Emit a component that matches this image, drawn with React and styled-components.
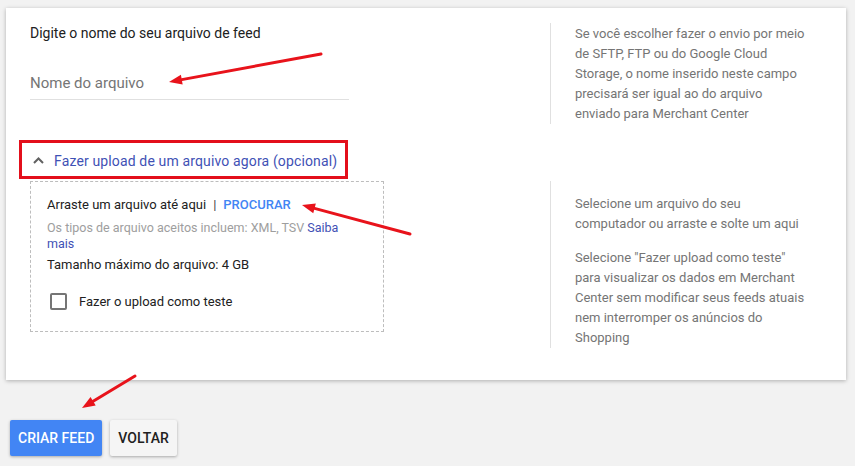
import React from "react";
import styled, { createGlobalStyle } from "styled-components";

const Global = createGlobalStyle`
  html, body { margin: 0; padding: 0; background: #f2f2f2; }
  body { font-family: Roboto, "Noto Sans", Arial, sans-serif; -webkit-font-smoothing: antialiased; }
  * { box-sizing: border-box; }
`;

const Page = styled.div`
  position: relative;
  width: 855px;
  height: 466px;
  padding: 8px 0 0 6px;
  overflow: hidden;
`;

const Card = styled.section`
  width: 840px;
  background: #fff;
  box-shadow: 0 1px 4px rgba(0, 0, 0, 0.28);
  padding: 15px 0 32px 0;
`;

const Row = styled.div`
  display: grid;
  grid-template-columns: 544px 296px;
  margin-top: ${(p) => p.$gap || 0}px;
`;

const Main = styled.div`
  padding-left: 24px;
`;

const Help = styled.aside`
  border-left: 1px solid #e0e0e0;
  padding: ${(p) => p.$top || 0}px 0 0 24px;
  color: #757575;
  font-size: 13px;
  line-height: 20px;
`;

const HelpText = styled.p`
  margin: 0 0 ${(p) => p.$after || 0}px 0;
  width: 234px;
`;

const Title = styled.div`
  font-size: 14px;
  line-height: 20px;
  color: #212121;
`;

const NameInput = styled.input`
  display: block;
  margin-top: 20px;
  width: 319px;
  height: 37px;
  padding: 4px 0 0 0;
  border: none;
  border-bottom: 1px solid #e0e0e0;
  outline: none;
  font-family: Roboto, Arial, sans-serif;
  font-size: 15px;
  color: #212121;
  background: transparent;
  &::placeholder { color: #757575; }
`;

const Expander = styled.div`
  display: flex;
  align-items: center;
  gap: 10px;
  margin: 16px 0 0 13px;
  width: 329px;
  height: 39px;
  padding: 2px 0 0 11px;
  border: 3px solid #e30f1b;
  color: #3f51b5;
  font-size: 14px;
  letter-spacing: 0.14px;
`;

const DropZone = styled.div`
  width: 354px;
  border: 1px dashed #bdbdbd;
  padding: 13px 16px 20px 16px;
  font-size: 13px;
  color: #212121;
`;

const Line = styled.div`
  line-height: ${(p) => p.$lh || 20}px;
  margin-top: ${(p) => p.$mt || 0}px;
  color: ${(p) => p.$color || "#212121"};
  font-size: ${(p) => p.$fs || 13}px;
`;

const Sep = styled.span`
  color: #424242;
  margin: 0 7px;
`;

const Browse = styled.a`
  color: #4285f4;
  font-weight: 500;
  text-decoration: none;
`;

const Link = styled.a`
  color: #3f51b5;
  text-decoration: none;
`;

const CheckRow = styled.label`
  display: flex;
  align-items: center;
  margin-top: 18px;
  height: 20px;
  padding-left: 3px;
  gap: 12px;
  font-size: 13px;
  color: #212121;
`;

const Box = styled.span`
  width: 17px;
  height: 17px;
  border: 2px solid #757575;
  border-radius: 2px;
`;

const Actions = styled.div`
  display: flex;
  gap: 8px;
  margin: 40px 0 0 4px;
`;

const Button = styled.button`
  height: 36px;
  padding: 0 8px;
  border: none;
  border-radius: 2px;
  font-family: Roboto, Arial, sans-serif;
  font-size: 14px;
  font-weight: 500;
  letter-spacing: 0;
  background: ${(p) => (p.$primary ? "#4285f4" : "#f5f5f5")};
  color: ${(p) => (p.$primary ? "#fff" : "#212121")};
  box-shadow: 0 1px 3px rgba(0, 0, 0, 0.3);
`;

const Overlay = styled.svg`
  position: absolute;
  left: 0;
  top: 0;
  pointer-events: none;
`;

function Arrow({ from, to }) {
  const dx = to[0] - from[0];
  const dy = to[1] - from[1];
  const len = Math.hypot(dx, dy);
  const ux = dx / len;
  const uy = dy / len;
  const hl = 13;
  const hw = 5;
  const bx = to[0] - ux * hl;
  const by = to[1] - uy * hl;
  const px = -uy * hw;
  const py = ux * hw;
  return (
    <g>
      <line x1={from[0]} y1={from[1]} x2={bx} y2={by} stroke="#e8131b" strokeWidth="3" strokeLinecap="round" />
      <polygon points={`${to[0]},${to[1]} ${bx + px},${by + py} ${bx - px},${by - py}`} fill="#e8131b" />
    </g>
  );
}

export default function App() {
  return (
    <>
      <Global />
      <Page>
        <Card>
          <Row>
            <Main>
              <Title>Digite o nome do seu arquivo de feed</Title>
              <NameInput placeholder="Nome do arquivo" />
            </Main>
            <Help $top={1}>
              <HelpText>
                Se você escolher fazer o envio por meio de SFTP, FTP ou do Google Cloud Storage, o nome inserido neste campo precisará ser igual ao do arquivo enviado para Merchant Center
              </HelpText>
            </Help>
          </Row>
          <Expander>
            <svg width="11" height="7" viewBox="0 0 11 7">
              <polyline points="1,6 5.5,1.5 10,6" fill="none" stroke="#616161" strokeWidth="2" />
            </svg>
            Fazer upload de um arquivo agora (opcional)
          </Expander>
          <Row $gap={2}>
            <Main>
              <DropZone>
                <Line>
                  Arraste um arquivo até aqui<Sep>|</Sep>
                  <Browse>PROCURAR</Browse>
                </Line>
                <Line $mt={5} $lh={16} $color="#9e9e9e" $fs={12.5}>
                  Os tipos de arquivo aceitos incluem: XML, TSV <Link>Saiba mais</Link>
                </Line>
                <Line $mt={5} $lh={16}>Tamanho máximo do arquivo: 4 GB</Line>
                <CheckRow>
                  <Box />
                  Fazer o upload como teste
                </CheckRow>
              </DropZone>
            </Main>
            <Help $top={13}>
              <HelpText $after={14}>Selecione um arquivo do seu computador ou arraste e solte um aqui</HelpText>
              <HelpText>
                Selecione "Fazer upload como teste" para visualizar os dados em Merchant Center sem modificar seus feeds atuais nem interromper os anúncios do Shopping
              </HelpText>
            </Help>
          </Row>
        </Card>
        <Actions>
          <Button $primary>CRIAR FEED</Button>
          <Button>VOLTAR</Button>
        </Actions>
        <Overlay width="855" height="466" viewBox="0 0 855 466">
          <Arrow from={[321, 54]} to={[169, 82]} />
          <Arrow from={[410, 234]} to={[302, 205]} />
          <Arrow from={[135, 376]} to={[82, 408]} />
        </Overlay>
      </Page>
    </>
  );
}
